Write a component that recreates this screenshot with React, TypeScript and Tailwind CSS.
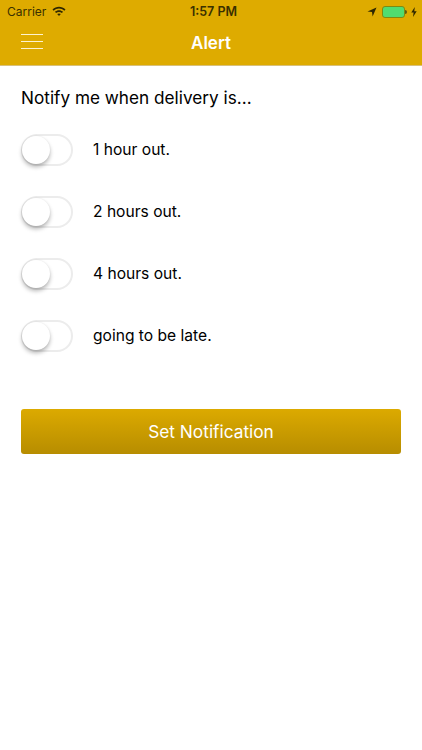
const rows = ["1 hour out.", "2 hours out.", "4 hours out.", "going to be late."];

function Toggle() {
  return (
    <div className="relative w-[52px] h-[32px] shrink-0 rounded-full border-2 border-[#ececec] bg-white">
      <div className="absolute left-[-1px] top-[0px] w-[28px] h-[28px] rounded-full bg-white shadow-[0_3px_4px_rgba(0,0,0,0.28),0_0_2px_rgba(0,0,0,0.08)]" />
    </div>
  );
}

export default function App() {
  return (
    <div className="w-[422px] h-[750px] bg-white overflow-hidden font-['Inter','Liberation_Sans',sans-serif]">
      <header className="bg-[#deab00] h-[66px] border-b border-[#d8c07a] flex flex-col">
        <div className="h-[22px] flex items-center justify-between pl-[7px] pr-[5px] pt-[1px] text-[#3a3000]">
          <div className="flex-1 flex items-center gap-[6px]">
            <span className="text-[12px]">Carrier</span>
            <svg width="14" height="10" viewBox="0 0 14 10" className="mt-[-2px]">
              <path d="M0.5 3.4C4.2 0 9.8 0 13.5 3.4L12.3 4.7C9.2 1.9 4.8 1.9 1.7 4.7Z" fill="#2e2700" />
              <path d="M2.9 5.7C5.3 3.6 8.7 3.6 11.1 5.7L9.9 7C8.2 5.6 5.8 5.6 4.1 7Z" fill="#2e2700" />
              <path d="M5.2 8C6.2 7.2 7.8 7.2 8.8 8L7 10Z" fill="#2e2700" />
            </svg>
          </div>
          <span className="font-semibold text-[12.5px] ml-[3px] mt-[2px]">1:57 PM</span>
          <div className="flex-1 flex items-center justify-end">
            <svg width="10" height="10" viewBox="0 0 10 10" className="mr-[5px]">
              <path d="M9.5 0.5L0.5 4.6L5 5L5.6 9.5Z" fill="#2e2700" />
            </svg>
            <div className="w-[23px] h-[12px] rounded-[3px] border border-[#7d8a12] bg-[#50dc70]" />
            <div className="w-[2px] h-[4px] bg-[#5a5a10] rounded-r-sm mr-[4px]" />
            <svg width="6" height="10" viewBox="0 0 6 10">
              <path d="M3.8 0L0.3 5.6H2.6L2 10L5.7 4.2H3.3Z" fill="#2e2700" />
            </svg>
          </div>
        </div>
        <div className="relative flex-1 flex items-center justify-center">
          <div className="absolute left-[21px] top-[12px] w-[22px] flex flex-col gap-[6px]">
            <div className="h-px bg-[#fdf3d0]" />
            <div className="h-px bg-[#fdf3d0]" />
            <div className="h-px bg-[#fdf3d0]" />
          </div>
          <span className="text-white font-semibold text-[17px]">Alert</span>
        </div>
      </header>
      <main className="px-[21px]">
        <p className="pt-[21px] text-[17.2px] leading-[22px] text-black">Notify me when delivery is...</p>
        <div className="mt-[25px] flex flex-col gap-[30px]">
          {rows.map((r) => (
            <div key={r} className="flex items-center gap-[20px]">
              <Toggle />
              <span className="text-[15.6px] text-black">{r}</span>
            </div>
          ))}
        </div>
        <button className="mt-[57px] w-[380px] h-[45px] rounded-[3px] bg-gradient-to-b from-[#dcaa00] to-[#b78d00] text-white text-[17.3px]">
          Set Notification
        </button>
      </main>
    </div>
  );
}
